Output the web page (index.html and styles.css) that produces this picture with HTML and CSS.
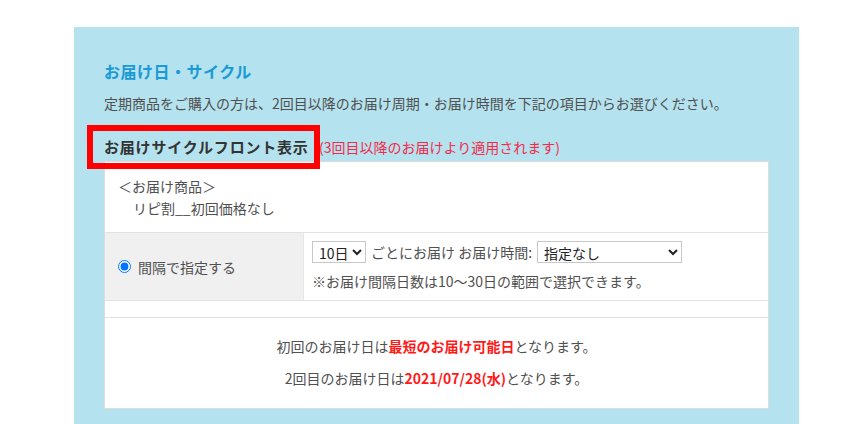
FILE: index.html
```html
<!DOCTYPE html>
<html lang="ja">
<head>
  <meta charset="UTF-8" />
  <meta name="viewport" content="width=device-width, initial-scale=1.0"/>
  <title>お届け日・サイクル</title>
  <link rel="stylesheet" href="styles.css">
</head>
<body>
  <div class="panel">
    <h2 class="panel-title">お届け日・サイクル</h2>
    <p class="lead">定期商品をご購入の方は、2回目以降のお届け周期・お届け時間を下記の項目からお選びください。</p>

    <div class="cycle-head">
      <span class="cycle-label">お届けサイクルフロント表示</span><span class="cycle-note">(3回目以降のお届けより適用されます)</span>
    </div>

    <div class="cycle-box">
      <div class="product">
        <p>＜お届け商品＞</p>
        <p class="product-name">リピ割__初回価格なし</p>
      </div>

      <div class="interval">
        <label class="interval-label">
          <input type="radio" name="cycle" checked />
          <span>間隔で指定する</span>
        </label>
        <div class="interval-body">
          <div class="interval-row">
            <select class="sel-days">
              <option>10日</option>
              <option>20日</option>
              <option>30日</option>
            </select>
            <span>ごとにお届け お届け時間:</span>
            <select class="sel-time">
              <option>指定なし</option>
              <option>午前中</option>
              <option>14時～16時</option>
            </select>
          </div>
          <p class="interval-hint">※お届け間隔日数は10〜30日の範囲で選択できます。</p>
        </div>
      </div>

      <div class="spacer"></div>

      <div class="dates">
        <p>初回のお届け日は<strong>最短のお届け可能日</strong>となります。</p>
        <p>2回目のお届け日は<strong>2021/07/28(水)</strong>となります。</p>
      </div>
    </div>
  </div>
</body>
</html>
```

FILE: styles.css
```css
body {
  margin: 0;
  background: #fff;
  font-family: "Noto Sans CJK JP", "Noto Sans", sans-serif;
  font-size: 14px;
  color: #505050;
}

p { margin: 0; }

.panel {
  width: 665px;
  margin: 27px 0 0 74px;
  padding: 32px 30px 40px;
  background: #b4e2ee;
}

.panel-title {
  margin: 0;
  font-size: 16px;
  line-height: 24px;
  letter-spacing: 0.5px;
  color: #1b9ad6;
  font-weight: bold;
}

.lead {
  margin-top: 8px;
  line-height: 24px;
}

.cycle-head {
  display: flex;
  align-items: center;
  margin-top: 16px;
  margin-bottom: -2px;
  margin-left: -11px;
  position: relative;
  z-index: 1;
}

.cycle-label {
  box-sizing: border-box;
  width: 221px;
  height: 32px;
  line-height: 32px;
  padding-left: 11px;
  font-size: 15px;
  font-weight: bold;
  letter-spacing: 0.8px;
  color: #333;
  outline: 6px solid #ff0000;
}

.cycle-note {
  margin-left: 5px;
  color: #f52a4a;
  font-size: 14px;
}

.cycle-box {
  background: #fff;
  border: 1px solid #dcdcdc;
}

.product {
  padding: 13px 13px;
  line-height: 22px;
  border-bottom: 1px solid #e2e2e2;
}

.product-name { padding-left: 15px; }

.interval {
  display: flex;
  border-bottom: 1px solid #e2e2e2;
}

.interval-label {
  box-sizing: border-box;
  width: 199px;
  display: flex;
  align-items: center;
  gap: 7px;
  padding-left: 13px;
  background: #f0f0f0;
  border-right: 1px solid #e6e6e6;
}

.interval-label input {
  margin: 0;
  width: 13px;
  height: 13px;
}

.interval-body {
  padding: 8px;
}

.interval-row {
  display: flex;
  align-items: center;
  gap: 5px;
}

.interval-row select {
  height: 22px;
  border: 1px solid #c8c8c8;
  border-radius: 0;
  background: #fff;
  font-family: inherit;
  font-size: 14px;
  color: #222;
  padding: 0 2px;
}

.sel-days { width: 54px; }
.sel-time { width: 145px; }

.interval-hint {
  margin-top: 7px;
  line-height: 22px;
}

.spacer {
  height: 16px;
  border-bottom: 1px solid #e2e2e2;
}

.dates {
  padding: 17px 0 19px;
  text-align: center;
  line-height: 22px;
}

.dates p + p { margin-top: 10px; }

.dates strong {
  color: #ff1a1a;
  font-weight: bold;
}
```
